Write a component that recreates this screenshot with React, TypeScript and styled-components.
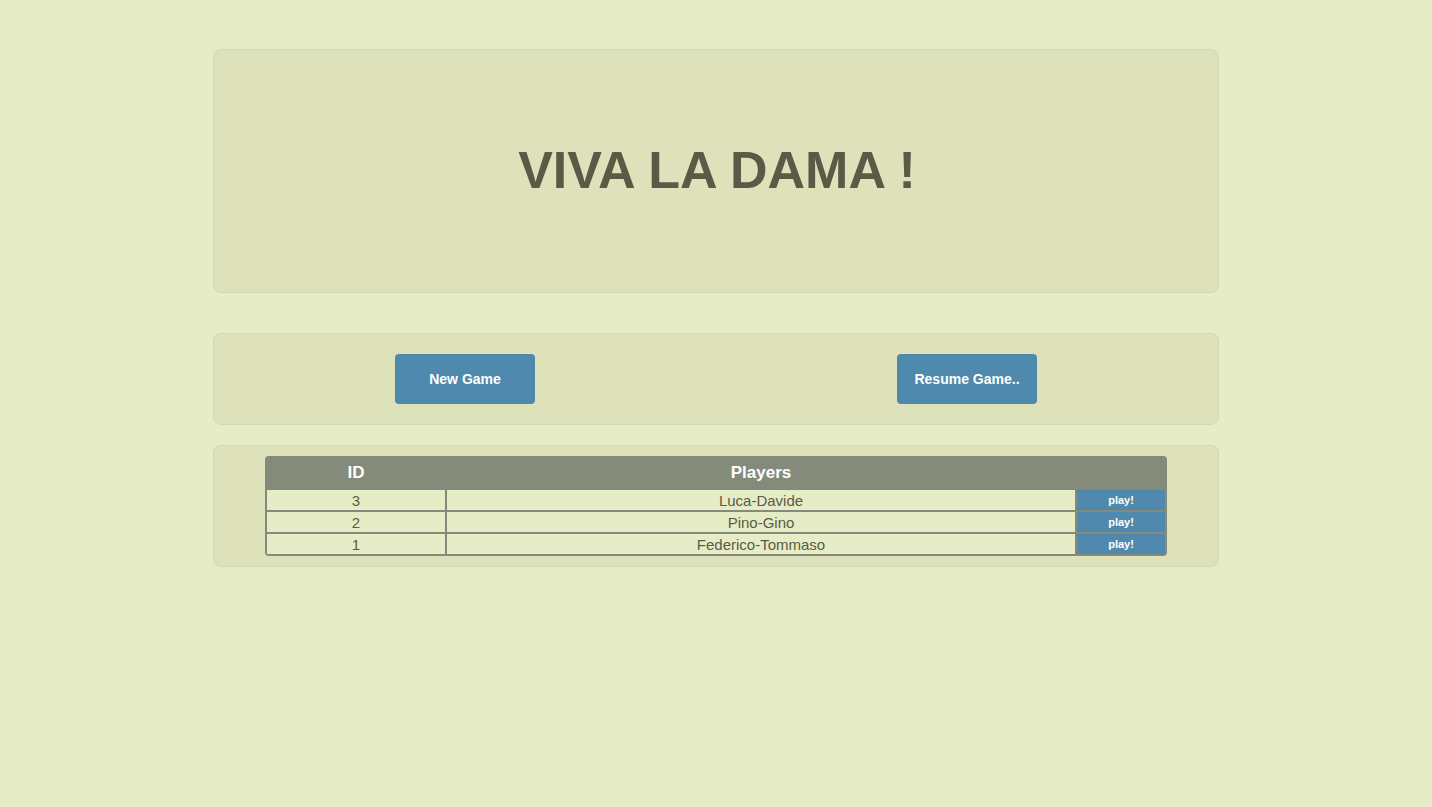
import React from 'react'
import styled, {createGlobalStyle} from 'styled-components'

const colors = {
  page: '#e6edc6',
  panel: '#dee2bb',
  panelBorder: '#d2d9b1',
  ink: '#5a5a47',
  blue: '#4f89ad',
  grid: '#858b7a',
}

const games = [
  {id: 3, players: 'Luca-Davide'},
  {id: 2, players: 'Pino-Gino'},
  {id: 1, players: 'Federico-Tommaso'},
]

const GlobalStyle = createGlobalStyle`
  html, body {
    margin: 0;
    background: ${colors.page};
    font-family: "Liberation Sans", Arial, Helvetica, sans-serif;
    color: ${colors.ink};
  }
`

export default function App() {
  return (
    <>
      <GlobalStyle/>
      <Page>
        <TitlePanel>
          <Title>VIVA LA DAMA !</Title>
        </TitlePanel>
        <ActionsPanel>
          <ActionSlot>
            <ActionButton>New Game</ActionButton>
          </ActionSlot>
          <ActionSlot>
            <ActionButton>Resume Game..</ActionButton>
          </ActionSlot>
        </ActionsPanel>
        <TablePanel>
          <GamesTable>
            <thead>
              <tr>
                <HeadCell>ID</HeadCell>
                <HeadCell>Players</HeadCell>
                <HeadCell/>
              </tr>
            </thead>
            <tbody>
              {games.map(game => (
                <tr key={game.id}>
                  <Cell width="178">{game.id}</Cell>
                  <Cell>{game.players}</Cell>
                  <PlayCell width="88">play!</PlayCell>
                </tr>
              ))}
            </tbody>
          </GamesTable>
        </TablePanel>
      </Page>
    </>
  )
}

const Page = styled.div`
  width: 1006px;
  margin: 49px auto 0;
  display: flex;
  flex-direction: column;
`

const Panel = styled.section`
  box-sizing: border-box;
  background: ${colors.panel};
  border: 1px solid ${colors.panelBorder};
  border-radius: 8px;
`

const TitlePanel = styled(Panel)`
  height: 244px;
  display: flex;
  align-items: center;
  justify-content: center;
`

const Title = styled.h1`
  margin: 0 0 2px 2px;
  font-size: 52px;
  font-weight: bold;
  color: ${colors.ink};
`

const ActionsPanel = styled(Panel)`
  margin-top: 40px;
  height: 92px;
  display: grid;
  grid-template-columns: 1fr 1fr;
  align-items: center;
`

const ActionSlot = styled.div`
  display: flex;
  justify-content: center;
`

const ActionButton = styled.button`
  width: 140px;
  height: 50px;
  border: none;
  border-radius: 4px;
  background: ${colors.blue};
  color: #fff;
  font-family: inherit;
  font-size: 14px;
  font-weight: bold;
  cursor: pointer;
`

const TablePanel = styled(Panel)`
  margin-top: 20px;
  padding: 10px 0;
  display: flex;
  justify-content: center;
`

const GamesTable = styled.table`
  width: 902px;
  background: ${colors.grid};
  border-spacing: 2px;
  border-radius: 4px;
`

const HeadCell = styled.th`
  height: 30px;
  padding: 0;
  color: #fff;
  font-size: 17px;
  font-weight: bold;
`

const Cell = styled.td`
  height: 20px;
  padding: 0;
  background: ${colors.page};
  text-align: center;
  font-size: 15px;
  color: ${colors.ink};
`

const PlayCell = styled(Cell)`
  background: ${colors.blue};
  color: #fff;
  font-size: 11px;
  font-weight: bold;
  cursor: pointer;
`
